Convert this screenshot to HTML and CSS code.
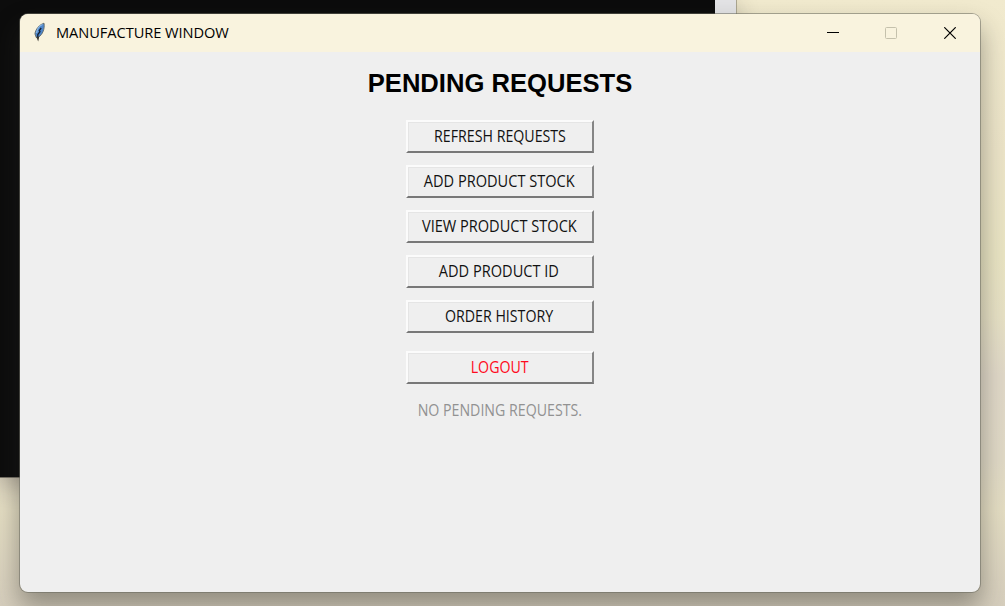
FILE: index.html
```html
<!DOCTYPE html>
<html lang="en">
<head>
<meta charset="utf-8">
<title>Manufacture Window</title>
<link rel="stylesheet" href="styles.css">
</head>
<body>
<div class="desktop">
  <div class="console"></div>
  <main class="window">
    <header class="titlebar">
      <svg class="feather" width="16" height="22" viewBox="0 0 16 22">
        <path d="M12 1.2 C7.6 2.5 3.2 7.5 3 12 L4.3 15.6 L6.4 15.3 C10.5 12.5 13 7 12 1.2Z" fill="#4d86cc" stroke="#66706f" stroke-width="1"/>
        <path d="M10.5 2.5 C7 4 4.8 8 4.6 11" fill="none" stroke="#8db9e8" stroke-width="1.2"/>
        <path d="M9.2 6 L7.3 8.5 L8 9.6 L5.8 12.5 L5.8 16" fill="none" stroke="#142032" stroke-width="1.3"/>
        <path d="M4.3 14.8 L7.2 14.8 L6.2 19.6 Z" fill="#38352f"/>
      </svg>
      <span class="title">MANUFACTURE WINDOW</span>
      <div class="controls">
        <svg width="12" height="12" viewBox="0 0 12 12"><path d="M0 5.5H12" stroke="#000"/></svg>
        <svg width="12" height="12" viewBox="0 0 12 12"><rect x=".5" y=".5" width="11" height="11" rx="1" fill="none" stroke="#c5c1ac"/></svg>
        <svg class="close" width="12" height="12" viewBox="0 0 12 12"><path d="M.3 .3L11.7 11.7M11.7 .3L.3 11.7" stroke="#000" stroke-width="1.2"/></svg>
      </div>
    </header>
    <section class="content">
      <h1 class="heading">PENDING REQUESTS</h1>
      <div class="actions">
        <button class="btn"><span class="label">REFRESH REQUESTS</span></button>
        <button class="btn"><span class="label wide">ADD PRODUCT STOCK</span></button>
        <button class="btn"><span class="label wide">VIEW PRODUCT STOCK</span></button>
        <button class="btn id"><span class="label wide">ADD PRODUCT ID</span></button>
        <button class="btn"><span class="label">ORDER HISTORY</span></button>
        <button class="btn logout"><span class="label">LOGOUT</span></button>
      </div>
      <p class="status"><span class="label">NO PENDING REQUESTS.</span></p>
    </section>
  </main>
</div>
</body>
</html>
```
FILE: styles.css
```css
* { box-sizing: border-box; }
body { margin: 0; overflow: hidden; font-family: "Open Sans", "Noto Sans", sans-serif; }
.desktop {
  position: relative;
  width: 1005px;
  height: 606px;
  padding: 13px 24px 13px 19px;
  background: linear-gradient(180deg, #f1eace 0, #ece4c8 25%, #e9e4c3 42%, #e7e1c5 52%, #e0d8c8 62%, #e0d9c6 76%, #e4ddc3 84%, #d6cebd 100%);
}
.console {
  position: absolute;
  left: 0;
  top: 0;
  width: 736px;
  height: 478px;
  background: #0c0c0c;
  border-right: 21px solid #e3e3e5;
  border-bottom: 1px solid #777267;
  box-shadow: 1px 0 0 #aaa58f, 0 6px 22px rgba(50, 40, 35, .3);
}
.window {
  position: relative;
  width: 962px;
  height: 580px;
  background: #efefef;
  background-clip: padding-box;
  border: 1px solid rgba(105, 105, 95, .55);
  border-radius: 9px;
  overflow: hidden;
  box-shadow: 0 14px 26px rgba(40, 40, 35, .4);
}
.titlebar {
  display: flex;
  align-items: center;
  height: 38px;
  padding: 0 24px 0 12px;
  background: #f9f3de;
}
.feather { margin-right: 8px; }
.title {
  margin-top: -2px;
  font-size: 15.3px;
  letter-spacing: -.05px;
  color: #000;
  white-space: nowrap;
  transform: scaleX(.955);
  transform-origin: left;
}
.controls { display: flex; gap: 46px; margin-left: auto; }
.controls svg { display: block; margin-left: -1px; margin-right: 1px; }
.controls .close { margin: 0; }
.content { display: flex; flex-direction: column; align-items: center; padding-top: 15px; }
.heading {
  margin: 0 0 21px;
  font: bold 25.6px/32px "Liberation Sans", Arial, sans-serif;
  color: #000;
}
.actions { display: flex; flex-direction: column; gap: 12px; }
.btn {
  width: 188px;
  height: 33px;
  padding: 0 1px 1px 0;
  font: 15.5px/20px "Open Sans", "Noto Sans", sans-serif;
  color: #111;
  white-space: nowrap;
  background: #efefef;
  border: 2px solid;
  border-color: #fbfbfb #858585 #787878 #fbfbfb;
  box-shadow: inset 1px 1px 0 #e5e5e5;
}
.label { display: inline-block; transform: scaleX(.915); }
.wide { transform: scaleX(.94); }
.btn .label { margin: 0 -10px; }
.id { padding-right: 3px; }
.logout { margin-top: 6px; color: #ff0a20; }
.status { margin: 15px 0 0; font-size: 15.5px; line-height: 22px; color: #929292; }
```
